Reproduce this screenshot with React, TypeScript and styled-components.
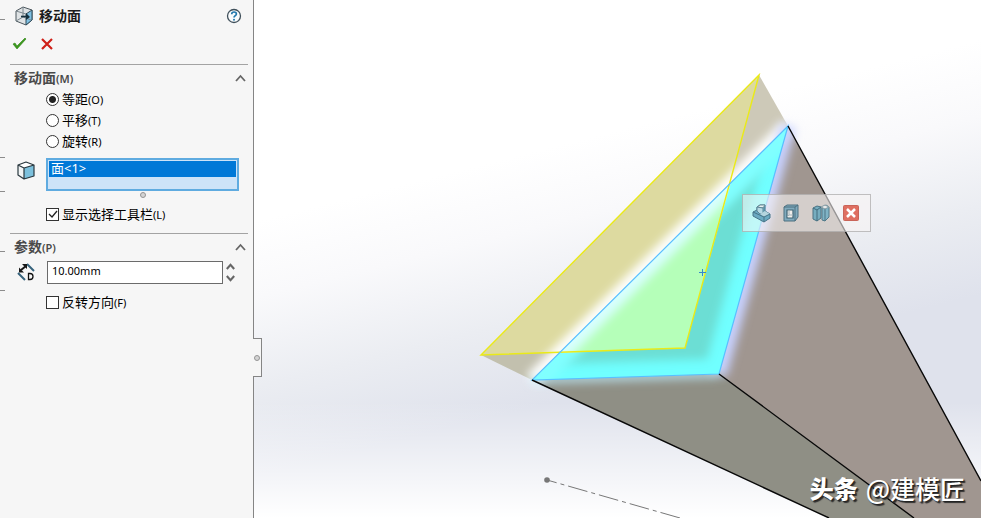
import React, { useState } from "react";
import styled, { createGlobalStyle, css } from "styled-components";

const GlobalStyle = createGlobalStyle`
  * { box-sizing: border-box; }
  html, body { margin: 0; padding: 0; }
  body {
    font-family: "Noto Sans", "Noto Sans CJK SC", sans-serif;
    font-size: 13px;
    color: #1c1c1c;
    background: #ffffff;
  }
  button, input { font: inherit; color: inherit; }
`;

const Workspace = styled.main`
  display: grid;
  grid-template-columns: 254px 1fr;
  min-height: 100vh;
`;

const Panel = styled.aside`
  position: relative;
  display: grid;
  grid-template-columns: 10px 1fr 5px;
  background: #f6f6f6;
  border-right: 1px solid #858585;
`;

const TickStrip = styled.div`
  display: flex;
  flex-direction: column;
`;

const Tick = styled.span<{ $gap: number }>`
  width: 5px;
  height: 1px;
  margin-top: ${(p) => p.$gap}px;
  background: #8c8c8c;
`;

const PanelContent = styled.div`
  min-width: 0;
`;

const TitleBar = styled.header`
  display: flex;
  align-items: center;
  height: 32px;
  padding: 0 6px 0 5px;
  gap: 6px;
`;

const Title = styled.h1`
  flex: 1;
  margin: 0;
  padding-bottom: 2px;
  font-family: "Noto Sans CJK SC", sans-serif;
  font-size: 14px;
  line-height: 20px;
  font-weight: 700;
`;

const IconButton = styled.button`
  display: grid;
  place-items: center;
  padding: 0;
  border: 0;
  background: transparent;
  cursor: pointer;
`;

const Actions = styled.div`
  display: flex;
  gap: 14px;
  height: 32px;
  padding: 4px 2px;
  align-items: flex-start;
`;

const Section = styled.section`
  border-top: 1px solid #a3a3a3;
`;

const SectionHeader = styled.button`
  display: flex;
  align-items: center;
  justify-content: space-between;
  width: 100%;
  height: 24px;
  padding: 2px 2px 0 4px;
  border: 0;
  background: transparent;
  color: #4a4a4a;
  font-size: 14px;
  font-weight: 700;
  line-height: 20px;
  cursor: pointer;
`;

const Mnemonic = styled.span<{ $strong?: boolean }>`
  font-family: "Noto Sans", sans-serif;
  font-size: 11px;
  font-weight: ${(p) => (p.$strong ? 600 : 400)};
`;

const FieldGrid = styled.div<{ $top?: number }>`
  display: grid;
  grid-template-columns: 36px 1fr;
  padding: ${(p) => p.$top ?? 0}px 9px 0 0;
`;

const FieldIcon = styled.div`
  display: flex;
  justify-content: center;
  padding: 2px 4px 0 0;
`;

const Choices = styled.fieldset`
  display: flex;
  flex-direction: column;
  margin: 0 0 6px 36px;
  padding: 0;
  border: 0;
`;

const Choice = styled.label`
  display: flex;
  align-items: center;
  gap: 3px;
  height: 21px;
  line-height: 18px;
  white-space: nowrap;
  color: #000000;
  > span:last-child { padding-bottom: 1px; }
`;

const mark = css`
  appearance: none;
  flex: none;
  width: 13px;
  height: 13px;
  margin: 0;
  border: 1px solid #333333;
  background: #ffffff;
`;

const Radio = styled.input`
  ${mark}
  border-radius: 50%;
  &:checked {
    background: radial-gradient(circle, #222222 0 3px, #ffffff 4px);
  }
`;

const CheckFrame = styled.span`
  position: relative;
  display: flex;
  svg {
    position: absolute;
    inset: 0;
    pointer-events: none;
  }
`;

const Check = styled.input`
  ${mark}
`;

const CheckRow = styled(Choice)<{ $top: number }>`
  margin: ${(p) => p.$top}px 0 8px 36px;
`;

const SelectionList = styled.ul`
  height: 33px;
  margin: 0;
  padding: 1px;
  border: 2px solid #5fabe0;
  outline: 0;
  list-style: none;
  background: #cde3f8;
`;

const SelectionItem = styled.li`
  height: 16px;
  padding: 0 2px;
  background: #0078d7;
  color: #ffffff;
  font-size: 13px;
  line-height: 14px;
  white-space: nowrap;
`;

const ResizeGrip = styled.span`
  display: block;
  width: 6px;
  height: 6px;
  margin: 1px auto 0;
  border: 1px solid #959595;
  border-radius: 50%;
  background: #d4d4d4;
`;

const NumberField = styled.div`
  display: flex;
  padding: 0 1px;
`;

const NumberInput = styled.input`
  flex: 1;
  min-width: 0;
  height: 23px;
  padding: 0 4px 4px;
  border: 1px solid #6b6b6b;
  background: #ffffff;
  color: #000000;
  font-size: 11px;
`;

const Spinner = styled.div`
  display: grid;
  grid-template-rows: 1fr 1fr;
  width: 15px;
`;

const PanelTab = styled.button`
  position: absolute;
  top: 338px;
  left: 100%;
  display: flex;
  align-items: center;
  width: 9px;
  height: 39px;
  padding: 0;
  border: 1px solid #858585;
  border-left: 0;
  background: #f6f6f6;
  z-index: 1;
  ${ResizeGrip} { margin: 0 0 0 1px; }
`;

const Viewport = styled.section`
  position: relative;
  overflow: hidden;
`;

const Scene = styled.svg`
  display: block;
  width: 100%;
  height: 100%;
`;

const ContextToolbar = styled.div`
  position: absolute;
  top: 194px;
  left: 488px;
  display: flex;
  align-items: center;
  gap: 10px;
  height: 38px;
  padding: 0 9px 0 8px;
  border: 1px solid #9b9b9b99;
  background: #f6f3f399;
`;

const Watermark = styled.div`
  position: absolute;
  right: 16px;
  bottom: 12px;
  display: flex;
  align-items: center;
  gap: 8px;
  font-family: "Noto Sans CJK SC", sans-serif;
  font-size: 25px;
  font-weight: 500;
  line-height: 36px;
  color: #ffffff;
  text-shadow: 1px 1px 1px #222222, 2px 2px 1px #333333;
  white-space: nowrap;
  strong { font-size: 24px; font-weight: 900; }
`;

const MoveFaceIcon = () => (
  <svg width="18" height="20" viewBox="0 0 18 20" aria-hidden="true">
    <path d="m1 5 7-4 9 3v10l-6 5-10-4z" fill="#dfe3e5" stroke="#4b565d" strokeLinejoin="round" />
    <path d="m11 8 6-4v10l-6 5z" fill="#7fc0e2" stroke="#2f4a58" strokeLinejoin="round" />
    <path d="m1 5 10 3M8 1v10M1 15l7-4 8 3" fill="none" stroke="#7a868d" />
    <path d="M6 10.500h7" fill="none" stroke="#17313e" strokeWidth="1.6" />
    <path d="m11 7 4 4-4 3z" fill="#17313e" />
  </svg>
);

const HelpIcon = () => (
  <svg width="16" height="16" viewBox="0 0 16 16" aria-hidden="true">
    <circle cx="8" cy="8" r="6.5" fill="#fafcfd" stroke="#40505b" strokeWidth="1.3" />
    <path d="M5.7 6.2c0-3 4.8-2.8 4.7-.2C10.4 7.6 8 7.7 8 9.5" fill="none" stroke="#2378ad" strokeWidth="1.7" />
    <circle cx="8" cy="11.8" r="1" fill="#2378ad" />
  </svg>
);

const AcceptIcon = () => (
  <svg width="15" height="14" viewBox="0 0 15 14" aria-hidden="true">
    <path d="m1 8 2-1 2 3 8-8 1 1-9 10z" fill="#3c991d" stroke="#2f8316" strokeWidth=".6" />
  </svg>
);

const CancelIcon = () => (
  <svg width="12" height="14" viewBox="0 0 12 14" aria-hidden="true">
    <path d="m1 3 10 10M11 3 1 13" stroke="#cf2018" strokeWidth="2.2" />
  </svg>
);

const Chevron = ({ down = false, small = false }: { down?: boolean; small?: boolean }) => (
  <svg width={small ? 9 : 11} height={small ? 7 : 8} viewBox="0 0 11 8" aria-hidden="true">
    <path d={down ? "m1 1 4.5 5L10 1" : "m1 7 4.5-5L10 7"} fill="none" stroke="#666666" strokeWidth={small ? 2.6 : 1.8} />
  </svg>
);

const FaceIcon = () => (
  <svg width="18" height="20" viewBox="0 0 18 20" aria-hidden="true">
    <path d="m1 5 8-3 8 3-10 3z" fill="#ffffff" />
    <path d="m1 5 6 3v11l-6-4z" fill="#f1f4f5" />
    <path d="m7 8 10-3v11L7 19z" fill="#7cc0dc" />
    <path d="m1 5 8-3 8 3v11L7 19l-6-4zM1 5l6 3 10-3M7 8v11" fill="none" stroke="#29373e" strokeWidth="1.2" strokeLinejoin="round" />
  </svg>
);

const DistanceIcon = () => (
  <svg width="18" height="19" viewBox="0 0 18 19" aria-hidden="true">
    <path d="m10 1 7 7M1 10l7 7" stroke="#37637c" strokeWidth="2" />
    <path d="m4 7 5-4" stroke="#171717" strokeWidth="2" />
    <path d="M2 9.500V4.500l5 5zM5 1h5v5z" fill="#171717" />
    <path d="M11.500 10.500h1.500c4 0 4 6 0 6h-1.500z" fill="none" stroke="#111111" strokeWidth="1.3" />
  </svg>
);

const ExtrudeIcon = () => (
  <svg width="20" height="20" viewBox="0 0 20 20" aria-hidden="true">
    <path d="m2 9 4-2V4l3-2h5v6l5 3v4l-6 4L2 13z" fill="#6baac2" stroke="#467488" strokeLinejoin="round" />
    <path d="m6 4 3-2h5l-2 3z" fill="#e7f0f1" stroke="#688b98" strokeLinejoin="round" />
    <path d="M6 4l6 1v5l-3 1-3-3z" fill="#b7d9e4" stroke="#5c8798" strokeLinejoin="round" />
    <path d="m9 11 5-3 5 3-6 3z" fill="#b4d5df" />
    <path d="m2 9 11 5 6-3M13 14v5" fill="none" stroke="#467488" />
  </svg>
);

const ShellIcon = () => (
  <svg width="20" height="20" viewBox="0 0 20 20" aria-hidden="true">
    <path d="m3 4 3-2h11v12l-3 4H3z" fill="#80aabd" stroke="#4c7080" strokeLinejoin="round" />
    <path d="M3 4h11v14M14 4l3-2" fill="none" stroke="#4c7080" />
    <path d="M6 7h6v8H6z" fill="#f1eeeb" stroke="#3e6475" strokeWidth="1.2" />
    <path d="M8 7v5l-2 2M8 12h4" fill="none" stroke="#a3b4ba" />
  </svg>
);

const OffsetFacesIcon = () => (
  <svg width="20" height="20" viewBox="0 0 20 20" aria-hidden="true">
    <path d="m2 5 4-2 4 1v11l-4 3-4-2z" fill="#76adbf" stroke="#4a7383" strokeLinejoin="round" />
    <path d="m2 5 4 2 4-3M6 7v11" fill="none" stroke="#426c7e" />
    <path d="m11 5 4-3 3 2v10l-4 4-3-1z" fill="#80b4c6" stroke="#527b8a" strokeLinejoin="round" />
    <path d="M14 6v12" fill="none" stroke="#4d7585" />
    <path d="m10 4 4-2 4 2-4 2z" fill="#e7eaea" stroke="#849ba4" />
  </svg>
);

const CloseIcon = () => (
  <svg width="20" height="20" viewBox="0 0 20 20" aria-hidden="true">
    <rect x="2.5" y="2.5" width="15" height="15" rx="1" fill="#df6f61" stroke="#c96459" />
    <path d="m6 6 8 8M14 6l-8 8" stroke="#ffffff" strokeWidth="2.5" />
  </svg>
);

const CutSolid = () => (
  <Scene viewBox="254 0 727 518" preserveAspectRatio="xMinYMin slice" role="img" aria-label="移动面">
    <defs>
      <linearGradient id="sky" gradientUnits="userSpaceOnUse" x1="540" y1="150" x2="600" y2="390">
        <stop offset="0" stopColor="#ffffff" />
        <stop offset=".3" stopColor="#f9f9fb" />
        <stop offset=".65" stopColor="#ebedf2" />
        <stop offset="1" stopColor="#dfe2ec" />
      </linearGradient>
      <linearGradient id="floor" x1="0" y1="0" x2="0" y2="1">
        <stop offset="0" stopColor="#ffffff" stopOpacity="0" />
        <stop offset="1" stopColor="#ffffff" />
      </linearGradient>
      <filter id="soft" filterUnits="userSpaceOnUse" x="400" y="50" width="500" height="420">
        <feGaussianBlur stdDeviation="5" />
      </filter>
      <clipPath id="selectedFace"><path d="M788 126 532 380 719 374z" /></clipPath>
      <clipPath id="overlap"><path d="M731 182 559 353 685 348z" /></clipPath>
    </defs>
    <rect x="254" width="727" height="518" fill="url(#sky)" />
    <rect x="254" y="402" width="727" height="116" fill="url(#floor)" />

    <path d="M759 75 788 126 719 374 685 348z" fill="#cdc9b8" />
    <path d="M481 355 532 380 719 374 685 348z" fill="#c2c0ae" />
    <path d="M788 126 981 481V518H914L719 374z" fill="#a09690" />
    <path d="M532 380 719 374 914 518H829z" fill="#8f8f85" />
    <path d="M759 75 481 355 685 348z" fill="#dddaa0" />

    <path d="M788 126 532 380" stroke="#ffffff" strokeWidth="15" filter="url(#soft)" />
    <path d="M788 126 719 374" stroke="#c8d1ff" strokeWidth="16" filter="url(#soft)" />
    <path d="M719 374 532 380" stroke="#c0efff" strokeWidth="6" filter="url(#soft)" />

    <g clipPath="url(#selectedFace)">
      <path d="M788 126 532 380 719 374z" fill="#6cded4" />
      <path d="M532 380 719 374 788 126" fill="none" stroke="#70ffff" strokeWidth="31" filter="url(#soft)" />
      <path d="M788 126 532 380" stroke="#80ffff" strokeWidth="30" filter="url(#soft)" />
    </g>
    <g clipPath="url(#overlap)">
      <path d="M731 182 559 353 685 348z" fill="#b5ffb9" />
      <path d="M788 126 532 380" stroke="#d8ffff" strokeWidth="20" filter="url(#soft)" />
    </g>

    <path d="M759 75 481 355 685 348z" fill="none" stroke="#eaea18" strokeWidth="1.4" />
    <path d="M788 126 532 380 719 374z" fill="none" stroke="#59bfff" strokeWidth="1.2" />
    <path d="M788 126 981 481M719 374 914 518M532 380 829 518" fill="none" stroke="#080808" strokeWidth="1.4" />
    <path d="M699 272.500h7M702.500 269v7" stroke="#3687cd" />
    <circle cx="547" cy="480" r="2.800" fill="#777777" />
    <path d="m547 480 133 38" fill="none" stroke="#777777" strokeDasharray="10 4 4 4 20 4 4 4 20 4 4 4 20 4 4 4 30" />
  </Scene>
);

const modes = [
  { name: "等距", key: "(O)" },
  { name: "平移", key: "(T)" },
  { name: "旋转", key: "(R)" },
];

const tickGaps = [19, 137, 33, 59, 38];

const tools = [
  { label: "拉伸", Icon: ExtrudeIcon },
  { label: "抽壳", Icon: ShellIcon },
  { label: "等距面", Icon: OffsetFacesIcon },
  { label: "关闭", Icon: CloseIcon },
];

export default function App() {
  const [mode, setMode] = useState("等距");
  const [showToolbar, setShowToolbar] = useState(true);
  const [distance, setDistance] = useState("10.00mm");
  const [faceOpen, setFaceOpen] = useState(true);
  const [parametersOpen, setParametersOpen] = useState(true);

  const step = (amount: number) =>
    setDistance((value) => `${Math.max(0, (parseFloat(value) || 0) + amount).toFixed(2)}mm`);

  return (
    <>
      <GlobalStyle />
      <Workspace>
        <Panel>
          <TickStrip aria-hidden="true">
            {tickGaps.map((gap) => <Tick key={gap} $gap={gap} />)}
          </TickStrip>
          <PanelContent>
            <TitleBar>
              <MoveFaceIcon />
              <Title>移动面</Title>
              <IconButton aria-label="帮助"><HelpIcon /></IconButton>
            </TitleBar>
            <Actions>
              <IconButton aria-label="确定"><AcceptIcon /></IconButton>
              <IconButton aria-label="取消"><CancelIcon /></IconButton>
            </Actions>
            <Section>
              <SectionHeader aria-expanded={faceOpen} onClick={() => setFaceOpen(!faceOpen)}>
                <span>移动面<Mnemonic $strong>(M)</Mnemonic></span>
                <Chevron down={!faceOpen} />
              </SectionHeader>
              {faceOpen && (
                <>
                  <Choices aria-label="移动面">
                    {modes.map((item) => (
                      <Choice key={item.name}>
                        <Radio type="radio" name="mode" checked={mode === item.name} onChange={() => setMode(item.name)} />
                        <span>{item.name}<Mnemonic>{item.key}</Mnemonic></span>
                      </Choice>
                    ))}
                  </Choices>
                  <FieldGrid>
                    <FieldIcon><FaceIcon /></FieldIcon>
                    <div>
                      <SelectionList role="listbox" aria-label="面" tabIndex={0}>
                        <SelectionItem role="option" aria-selected="true">面&lt;1&gt;</SelectionItem>
                      </SelectionList>
                      <ResizeGrip />
                    </div>
                  </FieldGrid>
                  <CheckRow $top={6}>
                    <CheckFrame>
                      <Check type="checkbox" checked={showToolbar} onChange={(e) => setShowToolbar(e.target.checked)} />
                      {showToolbar && (
                        <svg width="13" height="13" viewBox="0 0 13 13" aria-hidden="true">
                          <path d="m3 6 3 3 5-6" fill="none" stroke="#222222" strokeWidth="1.300" />
                        </svg>
                      )}
                    </CheckFrame>
                    <span>显示选择工具栏<Mnemonic>(L)</Mnemonic></span>
                  </CheckRow>
                </>
              )}
            </Section>
            <Section>
              <SectionHeader aria-expanded={parametersOpen} onClick={() => setParametersOpen(!parametersOpen)}>
                <span>参数<Mnemonic $strong>(P)</Mnemonic></span>
                <Chevron down={!parametersOpen} />
              </SectionHeader>
              {parametersOpen && (
                <>
                  <FieldGrid $top={3}>
                    <FieldIcon><DistanceIcon /></FieldIcon>
                    <NumberField>
                      <NumberInput aria-label="距离" value={distance} onChange={(e) => setDistance(e.target.value)} />
                      <Spinner>
                        <IconButton aria-label="增加" onClick={() => step(1)}><Chevron small /></IconButton>
                        <IconButton aria-label="减少" onClick={() => step(-1)}><Chevron small down /></IconButton>
                      </Spinner>
                    </NumberField>
                  </FieldGrid>
                  <CheckRow $top={8}>
                    <Check type="checkbox" />
                    <span>反转方向<Mnemonic>(F)</Mnemonic></span>
                  </CheckRow>
                </>
              )}
            </Section>
          </PanelContent>
          <PanelTab aria-label="折叠面板"><ResizeGrip /></PanelTab>
        </Panel>
        <Viewport>
          <CutSolid />
          {showToolbar && (
            <ContextToolbar role="toolbar" aria-label="选择工具栏">
              {tools.map(({ label, Icon }) => (
                <IconButton key={label} aria-label={label} onClick={label === "关闭" ? () => setShowToolbar(false) : undefined}>
                  <Icon />
                </IconButton>
              ))}
            </ContextToolbar>
          )}
          <Watermark><strong>头条</strong><span>@建模匠</span></Watermark>
        </Viewport>
      </Workspace>
    </>
  );
}
